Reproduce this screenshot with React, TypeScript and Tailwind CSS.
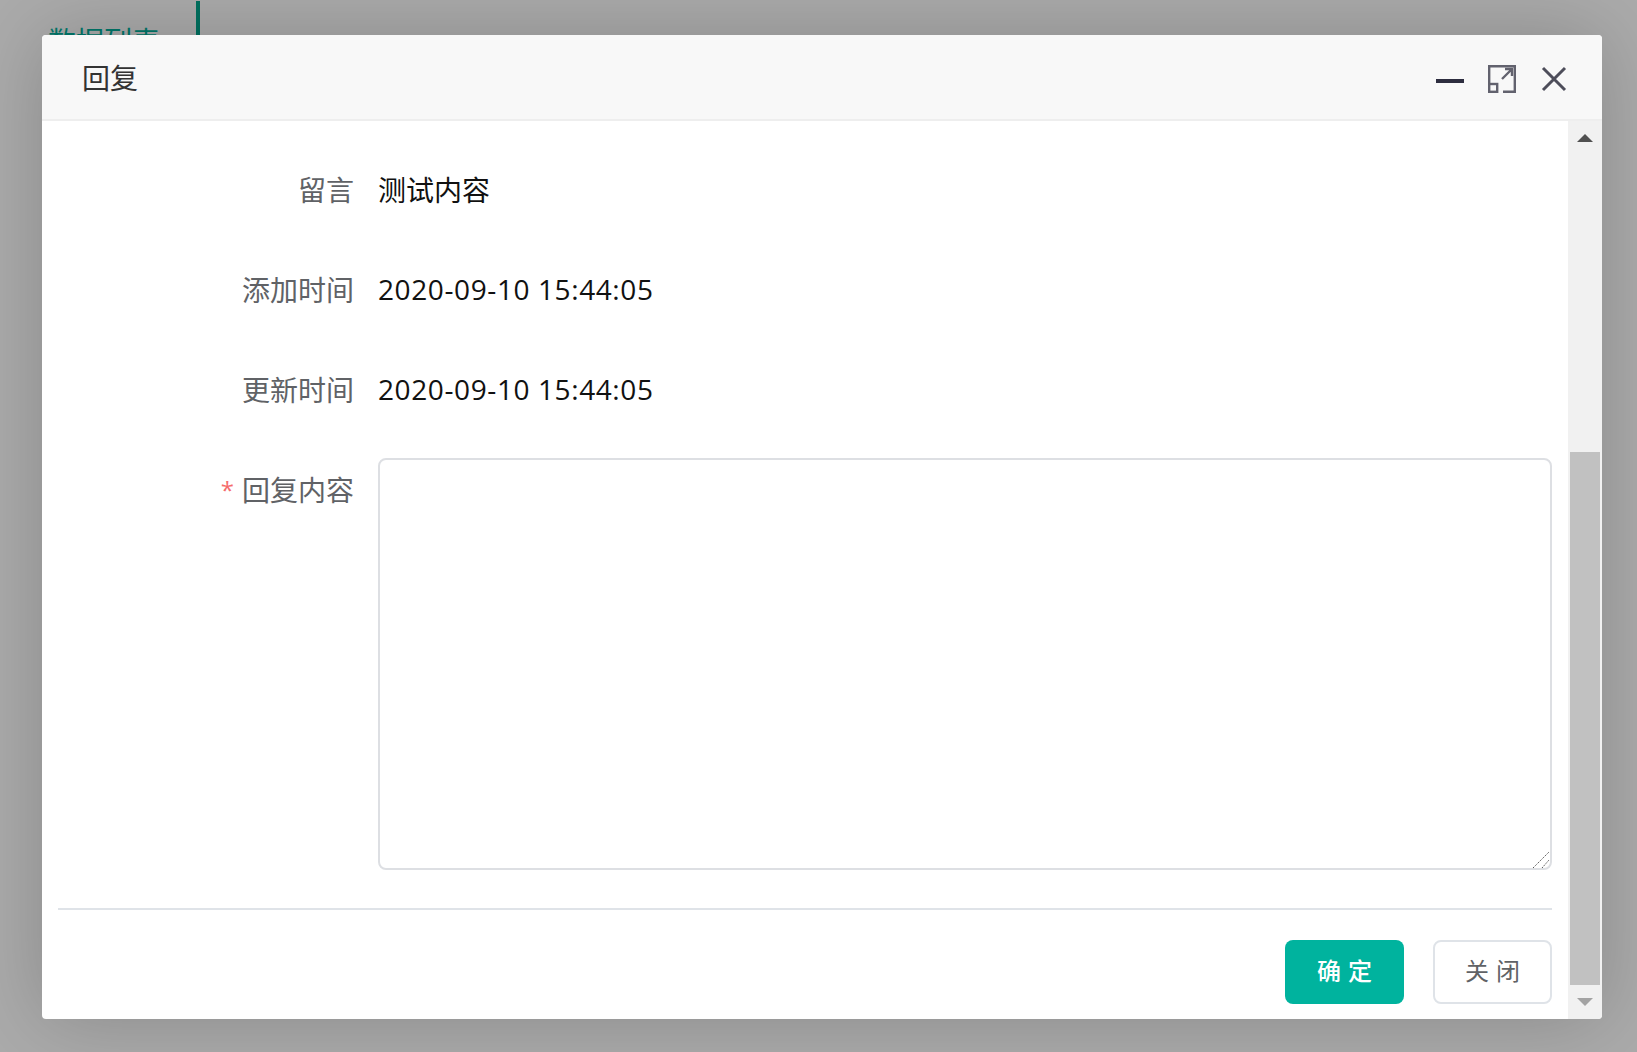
const font = { fontFamily: '"Open Sans", "Noto Sans CJK SC", sans-serif' };

function Row({ label, children, required }: { label: string; children: React.ReactNode; required?: boolean }) {
  return (
    <div className="flex items-start">
      <div className="w-[296px] h-16 flex items-center justify-end text-[28px] text-[#606266] shrink-0">
        {required && <span className="text-[#f56c6c] text-2xl mr-2">*</span>}
        {label}
      </div>
      <div className="ml-6 flex-1 min-h-16 flex items-center text-[28px] text-[#111111]">{children}</div>
    </div>
  );
}

export default function App() {
  return (
    <div className="relative h-screen w-full overflow-hidden bg-[#ababab]" style={font}>
      <div className="flex items-start pl-12 pt-px">
        <div className="mt-[22px] w-[120px] text-[28px] leading-9 text-[#00776a] whitespace-nowrap">数据列表</div>
        <div className="ml-7 w-1 h-16 bg-[#00705f]" />
      </div>

      <div className="absolute left-[42px] top-[35px] w-[1560px] h-[984px] bg-white rounded-[4px] flex flex-col overflow-hidden shadow-[0_0_80px_rgba(0,0,0,0.2)]">
        <div className="h-[86px] shrink-0 flex items-center justify-between bg-[#f8f8f8] border-b-2 border-[#eeeeee] pl-10 pr-[34px]">
          <span className="text-[28px] text-[#333333] translate-y-px">回复</span>
          <div className="flex items-center gap-6 translate-y-[2px]">
            <svg width="28" height="28" viewBox="0 0 28 28"><rect x="0" y="14" width="28" height="4" fill="#2d2d3f" /></svg>
            <svg width="28" height="28" viewBox="0 0 28 28" fill="none" stroke="#62626e" strokeWidth="2.4">
              <path d="M1.2 18V1.2H26.8V26.8H15" />
              <rect x="1.2" y="19" width="8" height="7.8" />
              <path d="M14 14L24 4M17 4H24V11" />
            </svg>
            <svg width="28" height="28" viewBox="0 0 28 28" fill="none" stroke="#4d4d5a" strokeWidth="3">
              <path d="M3 3L25 25M25 3L3 25" />
            </svg>
          </div>
        </div>

        <div className="flex-1 flex min-h-0">
          <div className="flex-1 px-4 pt-[37px]">
            <div className="flex flex-col gap-9">
              <Row label="留言">测试内容</Row>
              <Row label="添加时间"><span className="tracking-[0.6px] pb-0.5">2020-09-10 15:44:05</span></Row>
              <Row label="更新时间"><span className="tracking-[0.6px] pb-0.5">2020-09-10 15:44:05</span></Row>
              <Row label="回复内容" required>
                <div className="relative w-full">
                  <textarea className="block w-full h-[412px] border-2 border-[#dddfe3] rounded-lg bg-white outline-none resize-none" />
                  <svg width="18" height="18" viewBox="0 0 18 18" className="absolute right-[2px] bottom-[1px] pointer-events-none" fill="none" stroke="#555555" strokeWidth="1" strokeDasharray="1.4 1">
                    <path d="M1 17L17 1M10 17L17 9" />
                  </svg>
                </div>
              </Row>
            </div>
            <div className="mt-[38px] h-0.5 bg-[#dfe3e8]" />
            <div className="mt-[30px] flex justify-end gap-[29px]">
              <button className="w-[119px] h-16 pl-[7px] pb-0.5 rounded-lg bg-[#00b39e] text-white font-medium text-2xl tracking-[7px]">确定</button>
              <button className="w-[119px] h-16 pl-[7px] pb-0.5 rounded-lg border-2 border-[#dfe3e8] bg-white text-[#606266] text-2xl tracking-[7px]">关闭</button>
            </div>
          </div>

          <div className="w-[34px] shrink-0 bg-[#f1f1f1] flex flex-col items-center">
            <div className="h-[34px] flex items-center justify-center">
              <svg width="16" height="8" viewBox="0 0 16 8"><path d="M8 0L16 8H0Z" fill="#505050" /></svg>
            </div>
            <div className="flex-1 w-[30px] mt-[297px] bg-[#c1c1c1]" />
            <div className="h-[34px] flex items-center justify-center">
              <svg width="16" height="8" viewBox="0 0 16 8"><path d="M0 0H16L8 8Z" fill="#a3a3a3" /></svg>
            </div>
          </div>
        </div>
      </div>
    </div>
  );
}
